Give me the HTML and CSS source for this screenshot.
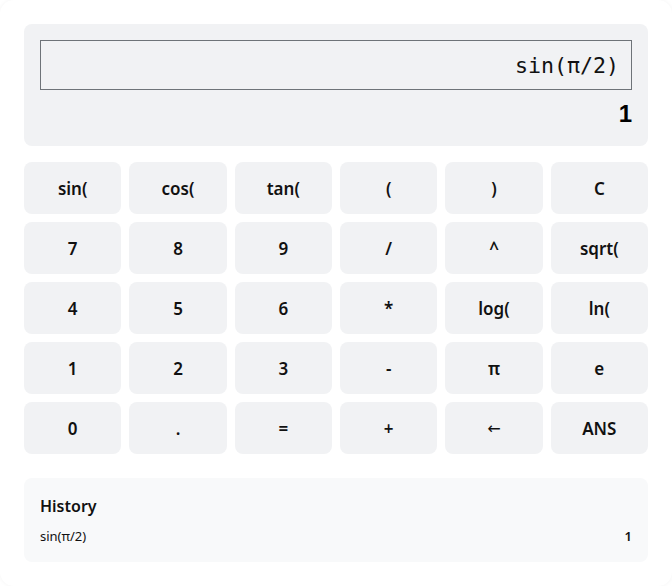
FILE: index.html
```html
<!DOCTYPE html>
<html lang="en">
<head>
<meta charset="utf-8">
<title>Scientific Calculator</title>
<link rel="stylesheet" href="styles.css">
</head>
<body>
<div class="calc">
  <div class="display">
    <input class="expr" type="text" value="sin(π/2)">
    <div class="result">1</div>
  </div>
  <div class="keys">
    <button class="key">sin(</button>
    <button class="key">cos(</button>
    <button class="key">tan(</button>
    <button class="key">(</button>
    <button class="key">)</button>
    <button class="key">C</button>
    <button class="key">7</button>
    <button class="key">8</button>
    <button class="key">9</button>
    <button class="key">/</button>
    <button class="key">^</button>
    <button class="key">sqrt(</button>
    <button class="key">4</button>
    <button class="key">5</button>
    <button class="key">6</button>
    <button class="key">*</button>
    <button class="key">log(</button>
    <button class="key">ln(</button>
    <button class="key">1</button>
    <button class="key">2</button>
    <button class="key">3</button>
    <button class="key">-</button>
    <button class="key">π</button>
    <button class="key">e</button>
    <button class="key">0</button>
    <button class="key">.</button>
    <button class="key">=</button>
    <button class="key">+</button>
    <button class="key arrow">←</button>
    <button class="key">ANS</button>
  </div>
  <div class="history">
    <div class="history-title">History</div>
    <div class="history-item"><span>sin(π/2)</span><span class="history-value">1</span></div>
  </div>
</div>
</body>
</html>
```
FILE: styles.css
```css
* { box-sizing: border-box; }
html, body { margin: 0; background: #ffffff; }
body { font-family: "Noto Sans", "Open Sans", sans-serif; color: #111; }
.calc {
  width: 672px;
  height: 586px;
  padding: 24px;
  background: #fff;
  border-radius: 14px;
  box-shadow: 0 0 4px rgba(0,0,0,0.05);
  display: flex;
  flex-direction: column;
}
.display {
  background: #f1f2f4;
  border-radius: 8px;
  padding: 16px;
  display: flex;
  flex-direction: column;
}
.expr {
  height: 50px;
  width: 100%;
  border: 1px solid #6e7378;
  background: transparent;
  font-family: "DejaVu Sans Mono", monospace;
  font-size: 21.6px;
  text-align: right;
  padding: 0 12px;
  color: #111;
  outline: none;
}
.result {
  margin-top: 8px;
  height: 32px;
  line-height: 32px;
  text-align: right;
  font-family: "Liberation Sans", Arial, sans-serif;
  font-weight: 700;
  font-size: 24px;
  color: #000;
}
.keys {
  margin-top: 16px;
  display: grid;
  grid-template-columns: repeat(6, 1fr);
  grid-auto-rows: 52px;
  gap: 8px;
}
.key {
  border: none;
  border-radius: 8px;
  background: #f1f2f4;
  font-family: "Noto Sans", "Open Sans", sans-serif;
  font-weight: 600;
  font-size: 17px;
  color: #111;
  padding: 0;
}
.key.arrow {
  font-family: "DejaVu Sans", sans-serif;
  font-weight: 400;
  font-size: 16px;
}
.history {
  margin-top: 24px;
  background: #f8f9fa;
  border-radius: 8px;
  padding: 16px;
  height: 84px;
}
.history-title {
  font-size: 16px;
  font-weight: 600;
  line-height: 24px;
}
.history-item {
  margin-top: 8px;
  display: flex;
  justify-content: space-between;
  font-size: 13px;
  line-height: 20px;
}
.history-value { font-weight: 600; }
```
